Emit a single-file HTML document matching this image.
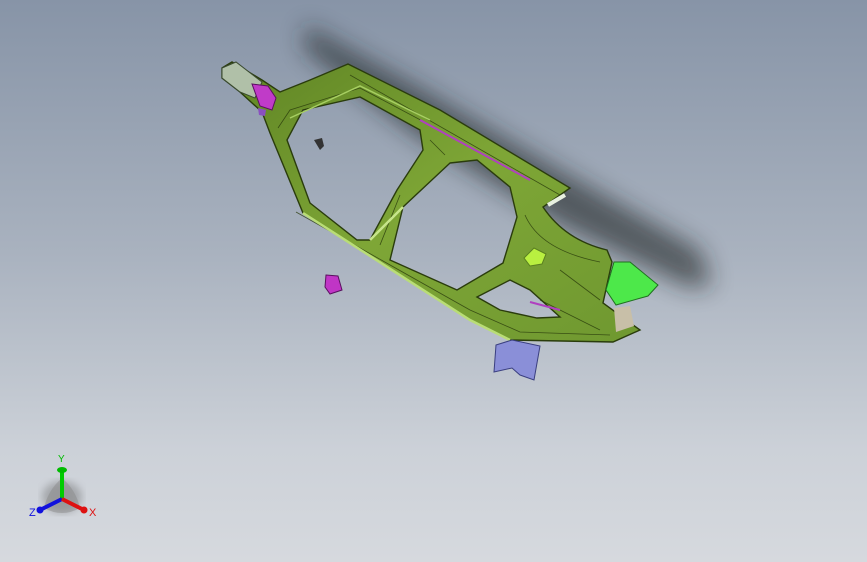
<!DOCTYPE html>
<html><head><style>
html,body{margin:0;padding:0}
body{width:867px;height:562px;overflow:hidden;background:linear-gradient(180deg,#8794a7 0%,#a9b2bf 45%,#ccd1d8 80%,#d6d9de 100%);font-family:"Liberation Sans",sans-serif}
</style></head><body>
<svg width="867" height="562" viewBox="0 0 867 562" xmlns="http://www.w3.org/2000/svg" style="position:absolute;left:0;top:0">
<defs>
<filter id="b" x="-50%" y="-50%" width="200%" height="200%"><feGaussianBlur stdDeviation="12"/></filter>
<filter id="b2"><feGaussianBlur stdDeviation="4"/></filter>
<linearGradient id="g" x1="0" y1="0" x2="1" y2="1"><stop offset="0" stop-color="#5f8424"/><stop offset="0.5" stop-color="#7ea636"/><stop offset="1" stop-color="#6f9830"/></linearGradient>
</defs>
<path d="M305,25 L420,88 L560,170 L700,250 L712,285 L690,288 L560,225 L420,138 L305,50 Z" fill="#1e2220" opacity="0.6" filter="url(#b)"/>
<path fill-rule="evenodd" fill="url(#g)" stroke="#2a3c0c" stroke-width="1.4" d="
M222,68 L232,62 L262,80 L280,92 L310,80 L348,64 L360,70 L440,110 L570,188 L543,207 Q565,240 607,250 L612,262 L603,303 L640,330 L613,342 L510,340 L470,320 L303,213 L270,133 L262,112 L240,92 L222,78 Z
M287,140 L303,110 L360,97 L420,130 L423,150 L397,190 L370,240 L357,240 L310,203 Z
M450,163 L477,160 L510,187 L517,217 L503,263 L457,290 L390,260 L403,207 Z
M477,297 L510,280 L530,290 L560,317 L537,318 L500,310 Z"/>
<g fill="none" stroke="#2a3c0c" stroke-width="0.8" opacity="0.8">
<path d="M278,128 L290,110 L360,88 L430,125"/>
<path d="M296,212 L470,310 L520,332 L610,335"/>
<path d="M350,75 L560,195"/>
<path d="M430,140 L445,155 M400,195 L380,245"/>
<path d="M525,215 Q540,250 600,262"/>
<path d="M560,270 L600,300 M540,300 L600,330"/>
</g>
<path d="M303,213 L470,320 L510,340" stroke="#b9dd76" stroke-width="2.5" fill="none"/>
<path d="M403,207 L370,240" stroke="#c6e58a" stroke-width="2.5" fill="none"/>
<path d="M290,118 L360,86 L430,120" stroke="#a7cf62" stroke-width="1.5" fill="none"/>
<path d="M420,120 L530,180" stroke="#b040c0" stroke-width="2" fill="none"/>
<path d="M530,302 L560,310" stroke="#b040c0" stroke-width="2" fill="none"/>
<path d="M548,205 L565,195" stroke="#e8f0e0" stroke-width="4"/>
<path d="M222,68 L236,62 L262,82 L255,98 L240,92 L222,78 Z" fill="#b0c0a8" stroke="#3a4a30"/>
<path d="M252,84 L268,86 L276,98 L272,110 L260,106 Z" fill="#c03bc8" stroke="#5a1060"/>
<path d="M258,108 L266,110 L265,116 L259,115 Z" fill="#8a50c0"/>
<path d="M326,275 L338,276 L342,290 L330,294 L325,287 Z" fill="#c035c6" stroke="#5a1060"/>
<path d="M314,140 L322,138 L324,146 L320,150 Z" fill="#333"/>
<path d="M524,258 L534,248 L546,254 L542,264 L530,266 Z" fill="#b9f040" stroke="#5a8020"/>
<path d="M606,290 L614,262 L630,262 L658,285 L648,296 L616,305 Z" fill="#4de84a" stroke="#207020"/>
<path d="M614,308 L630,306 L634,326 L616,332 Z" fill="#c8bfa8"/>
<path d="M496,345 L512,340 L540,346 L534,380 L520,375 L512,368 L494,372 Z" fill="#8a8fd8" stroke="#3a3f80"/>
<ellipse cx="62" cy="497" rx="20" ry="16" fill="#555" opacity="0.35" filter="url(#b2)"/>
<path d="M62,478 Q48,490 44,508 Q62,518 80,508 Q76,490 62,478Z" fill="#888" opacity="0.45"/>
<line x1="62" y1="499" x2="62" y2="472" stroke="#0c0" stroke-width="4"/>
<ellipse cx="62" cy="470" rx="5" ry="3" fill="#0b0"/>
<line x1="62" y1="499" x2="40" y2="510" stroke="#11d" stroke-width="4"/>
<circle cx="40" cy="510" r="3.5" fill="#11d"/>
<line x1="62" y1="499" x2="84" y2="510" stroke="#d11" stroke-width="4"/>
<circle cx="84" cy="510" r="3.5" fill="#d11"/>
<text x="58" y="462" font-size="10" fill="#0b0" font-family="Liberation Sans">Y</text>
<text x="29" y="516" font-size="11" fill="#11d" font-family="Liberation Sans">Z</text>
<text x="89" y="516" font-size="11" fill="#d11" font-family="Liberation Sans">X</text>
</svg>
</body></html>
